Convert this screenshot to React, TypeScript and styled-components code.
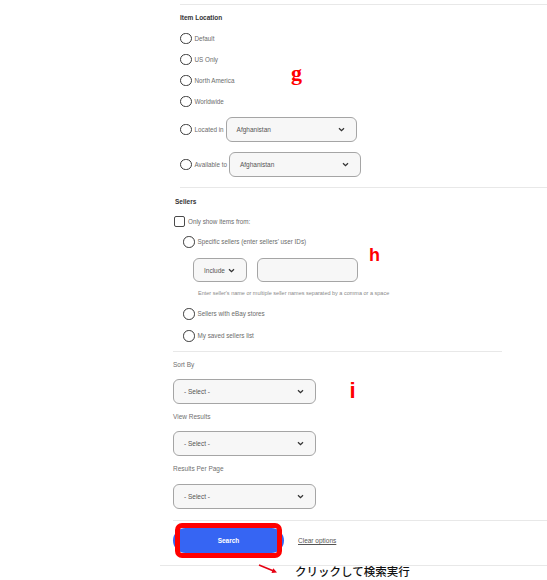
import styled, { createGlobalStyle } from 'styled-components';

const GlobalStyle = createGlobalStyle`
  html, body {
    margin: 0;
    padding: 0;
    background: #fff;
  }
  body {
    font-family: "Liberation Sans", Arial, sans-serif;
  }
`;

function Chevron() {
  return (
    <svg width='7' height='5' viewBox='0 0 7 5'>
      <path d='M1 1.2 L3.5 3.7 L6 1.2' fill='none' stroke='#333' strokeWidth='1.3' />
    </svg>
  );
}

function Dropdown({ w, text, ml = 0 }: { w: number; text: string; ml?: number }) {
  return (
    <SelectBox $w={w} $ml={ml}>
      <span>{text}</span>
      <Chevron />
    </SelectBox>
  );
}

export default function App() {
  return (
    <>
      <GlobalStyle />
      <Page>
        <LocationSection>
          <Title>Item Location</Title>
          <Row $h={21} $mt={5}>
            <Radio />
            <Label>Default</Label>
          </Row>
          <Row $h={21}>
            <Radio />
            <Label>US Only</Label>
          </Row>
          <Row $h={21}>
            <Radio />
            <Label>North America</Label>
          </Row>
          <Row $h={21}>
            <Radio />
            <Label>Worldwide</Label>
          </Row>
          <Row $h={25} $mt={5}>
            <Radio />
            <Label>Located in</Label>
            <Dropdown w={131} text='Afghanistan' ml={-1} />
          </Row>
          <Row $h={25} $mt={10}>
            <Radio />
            <Label>Available to</Label>
            <Dropdown w={132} text='Afghanistan' ml={-1} />
          </Row>
        </LocationSection>

        <Section>
          <Title $pl={2} $mt={9}>
            Sellers
          </Title>
          <Row $h={13} $mt={8}>
            <Checkbox />
            <Label>Only show items from:</Label>
          </Row>
          <Row $h={14} $mt={7} $indent={10}>
            <Radio />
            <Label>Specific sellers (enter sellers' user IDs)</Label>
          </Row>
          <Row $h={24} $mt={9} $indent={20}>
            <Dropdown w={54} text='Include' />
            <TextInput />
          </Row>
          <Helper>
            Enter seller's name or multiple seller names separated by a comma or a space
          </Helper>
          <Row $h={14} $mt={9} $indent={10}>
            <Radio />
            <Label>Sellers with eBay stores</Label>
          </Row>
          <Row $h={14} $mt={8} $indent={10}>
            <Radio />
            <Label>My saved sellers list</Label>
          </Row>
          <Divider $w={329} $mt={8} />
        </Section>

        <Section>
          <FieldLabel $mt={8}>Sort By</FieldLabel>
          <Row $h={25} $mt={9}>
            <Dropdown w={143} text='- Select -' />
          </Row>
          <FieldLabel $mt={8}>View Results</FieldLabel>
          <Row $h={25} $mt={9}>
            <Dropdown w={143} text='- Select -' />
          </Row>
          <FieldLabel $mt={8}>Results Per Page</FieldLabel>
          <Row $h={25} $mt={10}>
            <Dropdown w={143} text='- Select -' />
          </Row>
          <Divider $w={374} $mt={11} />
        </Section>

        <Actions>
          <ButtonWrap>
            <SearchButton>Search</SearchButton>
            <Highlight />
          </ButtonWrap>
          <ClearLink>Clear options</ClearLink>
        </Actions>
        <Divider $w={387} $mt={12} $ml={-13} />

        <Mark $x={291} $y={62} $size={22} $serif>
          g
        </Mark>
        <Mark $x={369} $y={246} $size={18}>
          h
        </Mark>
        <Mark $x={349.5} $y={379.5} $size={22}>
          i
        </Mark>

        <Arrow width='24' height='16' viewBox='0 0 24 16'>
          <line x1='3' y1='4' x2='17' y2='9.8' stroke='#e60012' strokeWidth='1.6' />
          <polygon points='21,11.5 17.3,7.3 15.5,11.9' fill='#e60012' />
        </Arrow>
        <Note>クリックして検索実行</Note>
      </Page>
    </>
  );
}

const Page = styled.div`
  position: relative;
  width: 547px;
  height: 580px;
  overflow: hidden;
  box-sizing: border-box;
  padding: 4px 0 0 173px;
  background: #fff;
`;

const LocationSection = styled.section`
  display: flex;
  flex-direction: column;
  margin-left: 7px;
  padding: 8px 0 10px;
  border-top: 1px solid #e8e8e8;
  border-bottom: 1px solid #e8e8e8;
`;

const Section = styled.section`
  display: flex;
  flex-direction: column;
`;

const Title = styled.div<{ $pl?: number; $mt?: number }>`
  font-size: 6.5px;
  font-weight: 700;
  line-height: 10px;
  color: #333;
  padding-left: ${(p) => p.$pl ?? 0}px;
  margin-top: ${(p) => p.$mt ?? 0}px;
`;

const Row = styled.div<{ $h: number; $mt?: number; $indent?: number }>`
  display: flex;
  align-items: center;
  gap: 3px;
  height: ${(p) => p.$h}px;
  margin-top: ${(p) => p.$mt ?? 0}px;
  padding-left: ${(p) => p.$indent ?? 0}px;
`;

const Radio = styled.span`
  flex: none;
  width: 11.5px;
  height: 11.5px;
  box-sizing: border-box;
  border: 1.2px solid #3a3a3a;
  border-radius: 50%;
  background: #fff;
`;

const Checkbox = styled.span`
  flex: none;
  width: 11px;
  height: 11px;
  box-sizing: border-box;
  border: 1.2px solid #4a4a4a;
  border-radius: 2px;
  background: #fff;
  margin-left: 1px;
`;

const Label = styled.span`
  font-size: 6.3px;
  line-height: 10px;
  color: #6b6b6b;
  white-space: nowrap;
`;

const FieldLabel = styled.div<{ $mt?: number }>`
  font-size: 6.5px;
  line-height: 10px;
  color: #707070;
  margin-top: ${(p) => p.$mt ?? 0}px;
`;

const SelectBox = styled.div<{ $w: number; $ml: number }>`
  flex: none;
  display: flex;
  align-items: center;
  justify-content: space-between;
  box-sizing: border-box;
  width: ${(p) => p.$w}px;
  height: 100%;
  margin-left: ${(p) => p.$ml}px;
  padding: 0 11px 0 10px;
  background: #f7f7f7;
  border: 1px solid #a5a5a5;
  border-radius: 6px;
  font-size: 6.5px;
  color: #555;
  white-space: nowrap;
`;

const TextInput = styled.div`
  flex: none;
  width: 101px;
  height: 100%;
  box-sizing: border-box;
  margin-left: 7px;
  background: #f7f7f7;
  border: 1px solid #a5a5a5;
  border-radius: 6px;
`;

const Helper = styled.div`
  margin-top: 6px;
  padding-left: 25px;
  font-size: 5.5px;
  line-height: 10px;
  color: #8a8a8a;
  white-space: nowrap;
`;

const Divider = styled.div<{ $w: number; $mt?: number; $ml?: number }>`
  width: ${(p) => p.$w}px;
  height: 1px;
  background: #e8e8e8;
  margin-top: ${(p) => p.$mt ?? 0}px;
  margin-left: ${(p) => p.$ml ?? 0}px;
`;

const Actions = styled.div`
  display: flex;
  align-items: center;
  gap: 14px;
  height: 25px;
  margin-top: 7px;
`;

const ButtonWrap = styled.div`
  position: relative;
  width: 111px;
  height: 25px;
`;

const SearchButton = styled.button`
  width: 100%;
  height: 100%;
  border: 0;
  border-radius: 13px;
  background: #3665f3;
  color: #fff;
  font-family: "Liberation Sans", Arial, sans-serif;
  font-size: 6.5px;
  font-weight: 700;
  padding: 0;
`;

const Highlight = styled.span`
  position: absolute;
  top: -5px;
  bottom: -5px;
  left: 2px;
  right: 2px;
  border: 5px solid #ff0000;
  border-radius: 7px;
  pointer-events: none;
`;

const ClearLink = styled.a`
  font-size: 6.5px;
  color: #555;
  text-decoration: underline;
`;

const Mark = styled.span<{ $x: number; $y: number; $size: number; $serif?: boolean }>`
  position: absolute;
  left: ${(p) => p.$x}px;
  top: ${(p) => p.$y}px;
  font-family: ${(p) =>
    p.$serif ? '"Liberation Serif", "Times New Roman", serif' : '"Liberation Sans", Arial, sans-serif'};
  font-size: ${(p) => p.$size}px;
  line-height: 1;
  font-weight: 700;
  color: #ff0000;
`;

const Arrow = styled.svg`
  position: absolute;
  left: 256px;
  top: 561px;
`;

const Note = styled.span`
  position: absolute;
  left: 295px;
  top: 566px;
  font-family: "Noto Sans CJK JP", sans-serif;
  font-size: 11.5px;
  font-weight: 500;
  line-height: 1;
  color: #111;
  white-space: nowrap;
`;
